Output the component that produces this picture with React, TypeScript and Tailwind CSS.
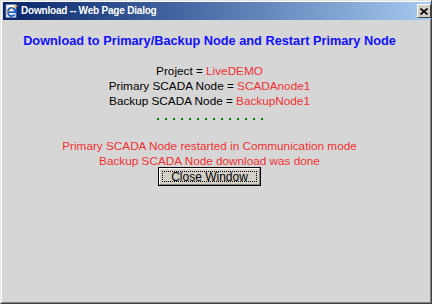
import { FC } from 'react'

const IeIcon: FC = () => (
  <svg width="14" height="14" viewBox="0 0 14 14" className="shrink-0">
    <rect x="1" y="0.5" width="10" height="13" fill="#ffffff" stroke="#6d7fa8" />
    <path d="M3 8.2h7.2c0-2.6-1.6-4.2-3.6-4.2S3 5.6 3 8.2c0 2.4 1.6 3.8 3.7 3.8 1.4 0 2.4-.6 3-1.6" fill="none" stroke="#1a5fd0" strokeWidth="1.8" />
    <path d="M1.5 9.5c3-4.5 8-7.5 11.5-7.5" fill="none" stroke="#f0b030" strokeWidth="1" />
  </svg>
)

const Dots: FC = () => (
  <div className="flex gap-[6px]">
    {Array.from({ length: 14 }).map((_, i) => (
      <div key={i} className="w-[2px] h-[2px] bg-[#008000]" />
    ))}
  </div>
)

export default function App() {
  return (
    <div
      className="w-[432px] h-[304px] flex flex-col bg-[#d6d6d6] border-l border-t border-r border-b border-l-[#e4e4e4] border-t-[#e4e4e4] border-r-[#404040] border-b-[#404040]"
      style={{ fontFamily: '"Liberation Sans", Arial, sans-serif' }}
    >
      <div className="flex flex-col flex-1 border-l border-t border-r border-b border-l-white border-t-white border-r-[#808080] border-b-[#808080] px-px pb-px">
        {/* title bar */}
        <div className="h-[18px] flex items-center pl-[2px] -mr-[2px] bg-gradient-to-r from-[#0a246a] to-[#a6caf0]">
          <IeIcon />
          <span className="ml-[2px] text-white font-bold text-[10px] leading-none tracking-[-0.2px]">
            Download -- Web Page Dialog
          </span>
          <div className="ml-auto w-[14px] h-[14px] bg-[#d4d0c8] border-l border-t border-r border-b border-l-white border-t-white border-r-[#404040] border-b-[#404040] flex items-center justify-center">
            <svg width="8" height="7" viewBox="0 0 8 7">
              <path d="M0.5 0.5l7 6M7.5 0.5l-7 6" stroke="#000" strokeWidth="1.6" />
            </svg>
          </div>
        </div>

        {/* body */}
        <div className="flex-1 flex flex-col items-center pr-[13px] pt-[13px] text-[11.75px] text-black">
          <div className="text-[12.75px] font-bold leading-[16px] text-[#1010ff]">
            Download to Primary/Backup Node and Restart Primary Node
          </div>

          <div className="mt-[14px] flex flex-col items-center leading-[15px]">
            <div>
              Project = <span className="text-[#f03030]">LiveDEMO</span>
            </div>
            <div>
              Primary SCADA Node = <span className="text-[#f03030]">SCADAnode1</span>
            </div>
            <div>
              Backup SCADA Node = <span className="text-[#f03030]">BackupNode1</span>
            </div>
          </div>

          <div className="mt-[10px]">
            <Dots />
          </div>

          <div className="mt-[18px] flex flex-col items-center leading-[15px] text-[#f03030]">
            <div>Primary SCADA Node restarted in Communication mode</div>
            <div>Backup SCADA Node download was done</div>
          </div>

          <button className="-mt-[1px] w-[103px] h-[19px] border border-black bg-[#d4d0c8] p-0">
            <div className="w-full h-full border-l border-t border-r border-b border-l-white border-t-white border-r-[#808080] border-b-[#808080] p-[2px]">
              <div className="w-full h-full border border-dotted border-black flex items-center justify-center text-[12px] leading-none text-black">
                Close Window
              </div>
            </div>
          </button>
        </div>
      </div>
    </div>
  )
}
